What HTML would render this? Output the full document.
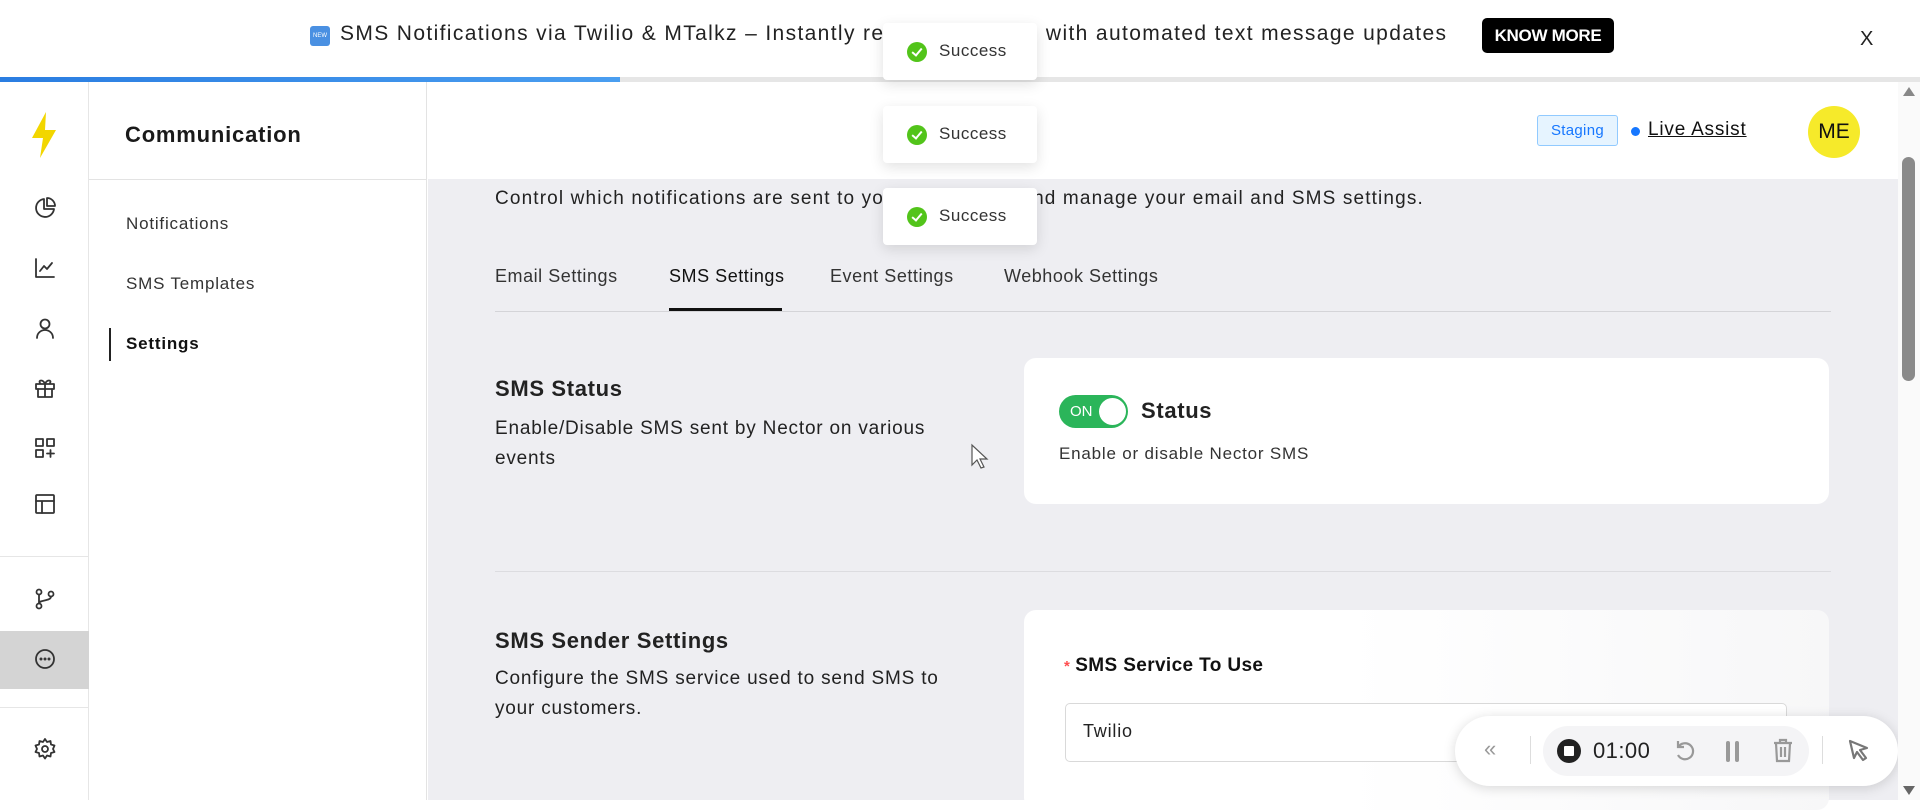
<!DOCTYPE html>
<html><head><meta charset="utf-8"><style>
*{box-sizing:border-box;margin:0;padding:0}
body{width:1920px;height:800px;overflow:hidden;font-family:"Liberation Sans",sans-serif;background:#fff;position:relative;color:#222;letter-spacing:0.05em}
.a{position:absolute}
.rail svg{position:absolute;left:33px;width:24px;height:24px;fill:none;stroke:#333;stroke-width:1.8;stroke-linecap:round;stroke-linejoin:round}
.toast{position:absolute;left:883px;width:154px;height:57px;background:#fff;border-radius:4px;box-shadow:0 4px 14px rgba(0,0,0,.12);font-size:17px;color:#333}
.toast i{position:absolute;left:24px;top:19px;width:20px;height:20px;border-radius:50%;background:#52c41a}
.toast i:after{content:"";position:absolute;left:7px;top:4px;width:4px;height:8px;border:solid #fff;border-width:0 2px 2px 0;transform:rotate(40deg)}
.toast span{position:absolute;left:56px;top:18px;letter-spacing:0.03em}
</style></head><body>
<!-- banner -->
<div class="a" style="left:0;top:0;width:1920px;height:77px;background:#fff"></div>
<div class="a" style="left:310px;top:26px;width:20px;height:20px;background:#4a90e2;border-radius:3px;color:#fff;font-size:6px;line-height:20px;text-align:center;letter-spacing:0">NEW</div>
<div class="a" style="left:340px;top:22px;font-size:21px;color:#222;white-space:nowrap;letter-spacing:0.065em">SMS Notifications via Twilio &amp; MTalkz – Instantly reach customers with automated text message updates</div>
<div class="a" style="left:1482px;top:18px;width:132px;height:35px;background:#000;border-radius:5px;color:#fff;font-size:17px;line-height:35px;text-align:center;font-weight:bold;letter-spacing:-.3px">KNOW MORE</div>
<div class="a" style="left:1860px;top:28px;font-size:20px;color:#222">X</div>
<div class="a" style="left:0;top:77px;width:1920px;height:5px;background:#e6e6e6"></div>
<div class="a" style="left:0;top:77px;width:620px;height:5px;background:linear-gradient(90deg,#2a7de1,#4a9ef0)"></div>
<!-- rail -->
<div class="a rail" style="left:0;top:82px;width:89px;height:718px;background:#fff;border-right:1px solid #e6e6e6">
<svg style="top:30px;width:28px;height:46px;left:30px" viewBox="0 0 28 46"><path d="M16 0 L2 26 H13 L10 46 L26 18 H15 Z" fill="#f2d600" stroke="none"/></svg>
<svg style="top:114px" viewBox="0 0 24 24"><path d="M21 13A9 9 0 1 1 11 3v10z"/><path d="M14 2a8 8 0 0 1 8 8h-8z"/></svg>
<svg style="top:174px" viewBox="0 0 24 24"><path d="M3 3v18h18"/><path d="M7 15l4-5 3 3 5-6"/></svg>
<svg style="top:234px" viewBox="0 0 24 24"><circle cx="12" cy="8" r="4.5"/><path d="M4 22c0-5 4-8 8-8s8 3 8 8"/></svg>
<svg style="top:294px" viewBox="0 0 24 24"><rect x="3" y="8" width="18" height="5"/><path d="M5 13v8h14v-8M12 8v13M12 8c-2-5-7-4-5-1M12 8c2-5 7-4 5-1"/></svg>
<svg style="top:354px" viewBox="0 0 24 24"><rect x="3" y="3" width="7" height="7"/><rect x="14" y="3" width="7" height="7"/><rect x="3" y="14" width="7" height="7"/><path d="M17.5 14v7M14 17.5h7"/></svg>
<svg style="top:410px" viewBox="0 0 24 24"><rect x="3" y="3" width="18" height="18" rx="1"/><path d="M3 9h18M9 9v12"/></svg>
<div class="a" style="left:0;top:474px;width:89px;height:1px;background:#e6e6e6"></div>
<svg style="top:505px" viewBox="0 0 24 24"><circle cx="6" cy="5" r="2.5"/><circle cx="6" cy="19" r="2.5"/><circle cx="18" cy="7" r="2.5"/><path d="M6 7.5v9M18 9.5c0 5-12 3-12 7"/></svg>
<div class="a" style="left:0;top:549px;width:89px;height:58px;background:#d4d4d4"></div>
<svg style="top:565px" viewBox="0 0 24 24"><circle cx="12" cy="12" r="9"/><circle cx="8" cy="12" r=".6" fill="#333"/><circle cx="12" cy="12" r=".6" fill="#333"/><circle cx="16" cy="12" r=".6" fill="#333"/></svg>
<div class="a" style="left:0;top:625px;width:89px;height:1px;background:#e6e6e6"></div>
<svg style="top:655px" viewBox="0 0 24 24"><circle cx="12" cy="12" r="3"/><path d="M12 2l2 3 3.5-1 .5 3.5 3.5 1-1.5 3.5 1.5 3-3.5 1-.5 3.5-3.5-1-2 3-2-3-3.5 1-.5-3.5-3.5-1 1.5-3-1.5-3.5 3.5-1 .5-3.5 3.5 1z"/></svg>
</div>
<!-- sidebar -->
<div class="a" style="left:89px;top:82px;width:338px;height:718px;background:#fff;border-right:1px solid #e3e3e3"></div>
<div class="a" style="left:125px;top:122px;font-size:22px;font-weight:bold;color:#1a1a1a">Communication</div>
<div class="a" style="left:89px;top:179px;width:338px;height:1px;background:#e3e3e3"></div>
<div class="a" style="left:126px;top:214px;font-size:17px;color:#333">Notifications</div>
<div class="a" style="left:126px;top:274px;font-size:17px;color:#333">SMS Templates</div>
<div class="a" style="left:109px;top:328px;width:2px;height:33px;background:#222"></div>
<div class="a" style="left:126px;top:334px;font-size:17px;font-weight:bold;color:#111">Settings</div>
<!-- header -->
<div class="a" style="left:428px;top:82px;width:1470px;height:97px;background:#fff"></div>
<div class="a" style="left:1537px;top:115px;width:81px;height:31px;background:#e6f4ff;border:1px solid #91caff;border-radius:3px;color:#1677ff;font-size:15px;line-height:29px;text-align:center;letter-spacing:0.02em">Staging</div>
<div class="a" style="left:1631px;top:127px;width:9px;height:9px;border-radius:50%;background:#1677ff"></div>
<div class="a" style="left:1648px;top:119px;font-size:19px;color:#111;text-decoration:underline">Live Assist</div>
<div class="a" style="left:1808px;top:106px;width:52px;height:52px;border-radius:50%;background:#f6ea2a;font-size:21px;line-height:52px;text-align:center;color:#111;letter-spacing:0">ME</div>
<!-- main -->
<div class="a" style="left:428px;top:179px;width:1470px;height:621px;background:#eeeef2"></div>
<div class="a" style="left:495px;top:188px;font-size:19px;color:#222;white-space:nowrap;letter-spacing:0.06em">Control which notifications are sent to your customers. And manage your email and SMS settings.</div>
<div class="a" style="left:495px;top:266px;font-size:18px;color:#333;letter-spacing:0.03em">Email Settings</div>
<div class="a" style="left:669px;top:266px;font-size:18px;color:#111;letter-spacing:0.03em">SMS Settings</div>
<div class="a" style="left:830px;top:266px;font-size:18px;color:#333;letter-spacing:0.03em">Event Settings</div>
<div class="a" style="left:1004px;top:266px;font-size:18px;color:#333;letter-spacing:0.03em">Webhook Settings</div>
<div class="a" style="left:495px;top:311px;width:1336px;height:1px;background:#d4d4d8"></div>
<div class="a" style="left:669px;top:308px;width:113px;height:3px;background:#111"></div>
<div class="a" style="left:495px;top:376px;font-size:22px;font-weight:bold;color:#222;letter-spacing:0.03em">SMS Status</div>
<div class="a" style="left:495px;top:414px;font-size:19px;color:#222;line-height:30px;width:465px">Enable/Disable SMS sent by Nector on various events</div>
<div class="a" style="left:1024px;top:358px;width:805px;height:146px;background:#fff;border-radius:12px"></div>
<div class="a" style="left:1059px;top:395px;width:69px;height:33px;border-radius:17px;background:#2bb55a"></div>
<div class="a" style="left:1070px;top:403px;font-size:15px;color:#fff;letter-spacing:0">ON</div>
<div class="a" style="left:1099px;top:398px;width:27px;height:27px;border-radius:50%;background:#fff"></div>
<div class="a" style="left:1141px;top:398px;font-size:22px;font-weight:bold;color:#222;letter-spacing:0.03em">Status</div>
<div class="a" style="left:1059px;top:444px;font-size:17px;color:#333">Enable or disable Nector SMS</div>
<svg class="a" style="left:970px;top:443px" width="20" height="28" viewBox="0 0 20 28"><path d="M2 2v20l5-5 4 8 3-1-4-8h7z" fill="#fff" stroke="#555" stroke-width="1.2"/></svg>
<div class="a" style="left:495px;top:571px;width:1336px;height:1px;background:#dcdce0"></div>
<div class="a" style="left:495px;top:628px;font-size:22px;font-weight:bold;color:#222;letter-spacing:0.03em">SMS Sender Settings</div>
<div class="a" style="left:495px;top:664px;font-size:19px;color:#222;line-height:30px;width:475px">Configure the SMS service used to send SMS to your customers.</div>
<div class="a" style="left:1024px;top:610px;width:805px;height:200px;background:linear-gradient(90deg,#fff 40%,#f7f7f8);border-radius:12px"></div>
<div class="a" style="left:1064px;top:655px;font-size:19px;font-weight:bold;color:#111;letter-spacing:0.02em"><span style="color:#ff4d4f;font-size:15px;margin-right:5px">*</span>SMS Service To Use</div>
<div class="a" style="left:1065px;top:703px;width:722px;height:59px;border:1px solid #d9d9d9;border-radius:5px;background:#fff"></div>
<div class="a" style="left:1083px;top:721px;font-size:18px;color:#222">Twilio</div>
<!-- recorder -->
<div class="a" style="left:1455px;top:716px;width:443px;height:70px;border-radius:35px;background:#fff;box-shadow:0 2px 12px rgba(0,0,0,.15)"></div>
<div class="a" style="left:1484px;top:736px;font-size:22px;color:#999">«</div>
<div class="a" style="left:1530px;top:736px;width:1px;height:28px;background:#ddd"></div>
<div class="a" style="left:1543px;top:726px;width:266px;height:50px;border-radius:25px;background:#f4f4f6"></div>
<div class="a" style="left:1557px;top:739px;width:24px;height:24px;border-radius:50%;background:#222"></div>
<div class="a" style="left:1564px;top:746px;width:10px;height:10px;background:#fff;border-radius:1px"></div>
<div class="a" style="left:1593px;top:738px;font-size:22px;color:#222;letter-spacing:0.02em">01:00</div>
<svg class="a" style="left:1673px;top:738px" width="24" height="26" viewBox="0 0 24 26" fill="none" stroke="#999" stroke-width="2.2"><path d="M6 8a8 8 0 1 1-1 9"/><path d="M5 3v6h6"/></svg>
<div class="a" style="left:1726px;top:741px;width:4px;height:21px;background:#999;border-radius:2px"></div>
<div class="a" style="left:1735px;top:741px;width:4px;height:21px;background:#999;border-radius:2px"></div>
<svg class="a" style="left:1772px;top:737px" width="22" height="26" viewBox="0 0 22 26" fill="none" stroke="#999" stroke-width="2.2"><path d="M2 6h18M8 6V3h6v3M4 6l1 18h12l1-18M9 10v10M13 10v10"/></svg>
<div class="a" style="left:1822px;top:736px;width:1px;height:28px;background:#ddd"></div>
<svg class="a" style="left:1847px;top:738px" width="24" height="26" viewBox="0 0 24 26" fill="none" stroke="#777" stroke-width="2.2" stroke-linejoin="round"><path d="M3 3l17 7-7 2 6 8-3 2-6-8-3 6z"/></svg>
<!-- scrollbar -->
<div class="a" style="left:1898px;top:82px;width:22px;height:718px;background:#fafafa"></div>
<div class="a" style="left:1903px;top:87px;width:0;height:0;border-left:6px solid transparent;border-right:6px solid transparent;border-bottom:9px solid #888"></div>
<div class="a" style="left:1902px;top:157px;width:13px;height:224px;border-radius:7px;background:#8a8a8a"></div>
<div class="a" style="left:1903px;top:786px;width:0;height:0;border-left:6px solid transparent;border-right:6px solid transparent;border-top:9px solid #666"></div>
<!-- toasts -->
<div class="toast" style="top:23px"><i></i><span>Success</span></div>
<div class="toast" style="top:106px"><i></i><span>Success</span></div>
<div class="toast" style="top:188px"><i></i><span>Success</span></div>
</body></html>
